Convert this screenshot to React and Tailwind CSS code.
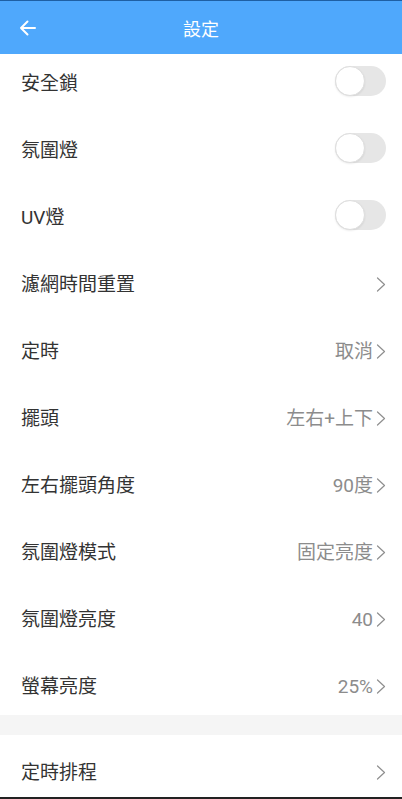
import React from "react";

const font = { fontFamily: '"Roboto", "Noto Sans CJK TC", sans-serif' };

function Toggle() {
  return (
    <div className="relative w-[51px] h-[30px] rounded-full bg-[#e6e6e6] mb-[6px]">
      <div className="absolute left-0 top-0 w-[30px] h-[30px] rounded-full bg-white border border-[#dedede] shadow-[0_1px_2px_rgba(0,0,0,0.08)]" />
    </div>
  );
}

function Chevron() {
  return (
    <svg width="10" height="15" viewBox="0 0 10 15" className="shrink-0">
      <path d="M1.5 1 L8.5 7.5 L1.5 14" fill="none" stroke="#8f8f8f" strokeWidth="1.2" strokeLinecap="round" strokeLinejoin="round" />
    </svg>
  );
}

function Row({ label, toggle, value, cls = "h-[67px] pb-[8px]" }) {
  return (
    <div className={`flex items-center justify-between pl-[21px] pr-[16px] ${cls}`}>
      <span className="text-[19px] text-[#333333] leading-none">{label}</span>
      {toggle ? (
        <Toggle />
      ) : (
        <div className="flex items-center gap-[3px]">
          {value && <span className="text-[19px] text-[#8c8c8c] leading-none">{value}</span>}
          <Chevron />
        </div>
      )}
    </div>
  );
}

export default function App() {
  return (
    <div className="w-[402px] h-[799px] bg-white flex flex-col overflow-hidden" style={font}>
      <div className="h-[1px] bg-[#1e5fa3]" />
      <div className="h-[53px] bg-[#4fa8fc] relative flex items-center justify-center">
        <svg width="17" height="16" viewBox="0 0 17 16" className="absolute left-[19px] top-[19px]">
          <path d="M16 8 H2 M8.5 1.5 L2 8 L8.5 14.5" fill="none" stroke="white" strokeWidth="2" strokeLinecap="round" strokeLinejoin="round" />
        </svg>
        <span className="text-white text-[18px] leading-none mt-[4px]">設定</span>
      </div>
      <Row label="安全鎖" toggle />
      <Row label="氛圍燈" toggle />
      <Row label="UV燈" toggle />
      <Row label="濾網時間重置" />
      <Row label="定時" value="取消" />
      <Row label="擺頭" value="左右+上下" />
      <Row label="左右擺頭角度" value="90度" />
      <Row label="氛圍燈模式" value="固定亮度" />
      <Row label="氛圍燈亮度" value="40" />
      <Row label="螢幕亮度" value="25%" cls="h-[58px]" />
      <div className="h-[20px] bg-[#f5f5f5]" />
      <Row label="定時排程" cls="h-[62px] pt-[12px]" />
      <div className="h-[2px] bg-[#222222]" />
    </div>
  );
}
